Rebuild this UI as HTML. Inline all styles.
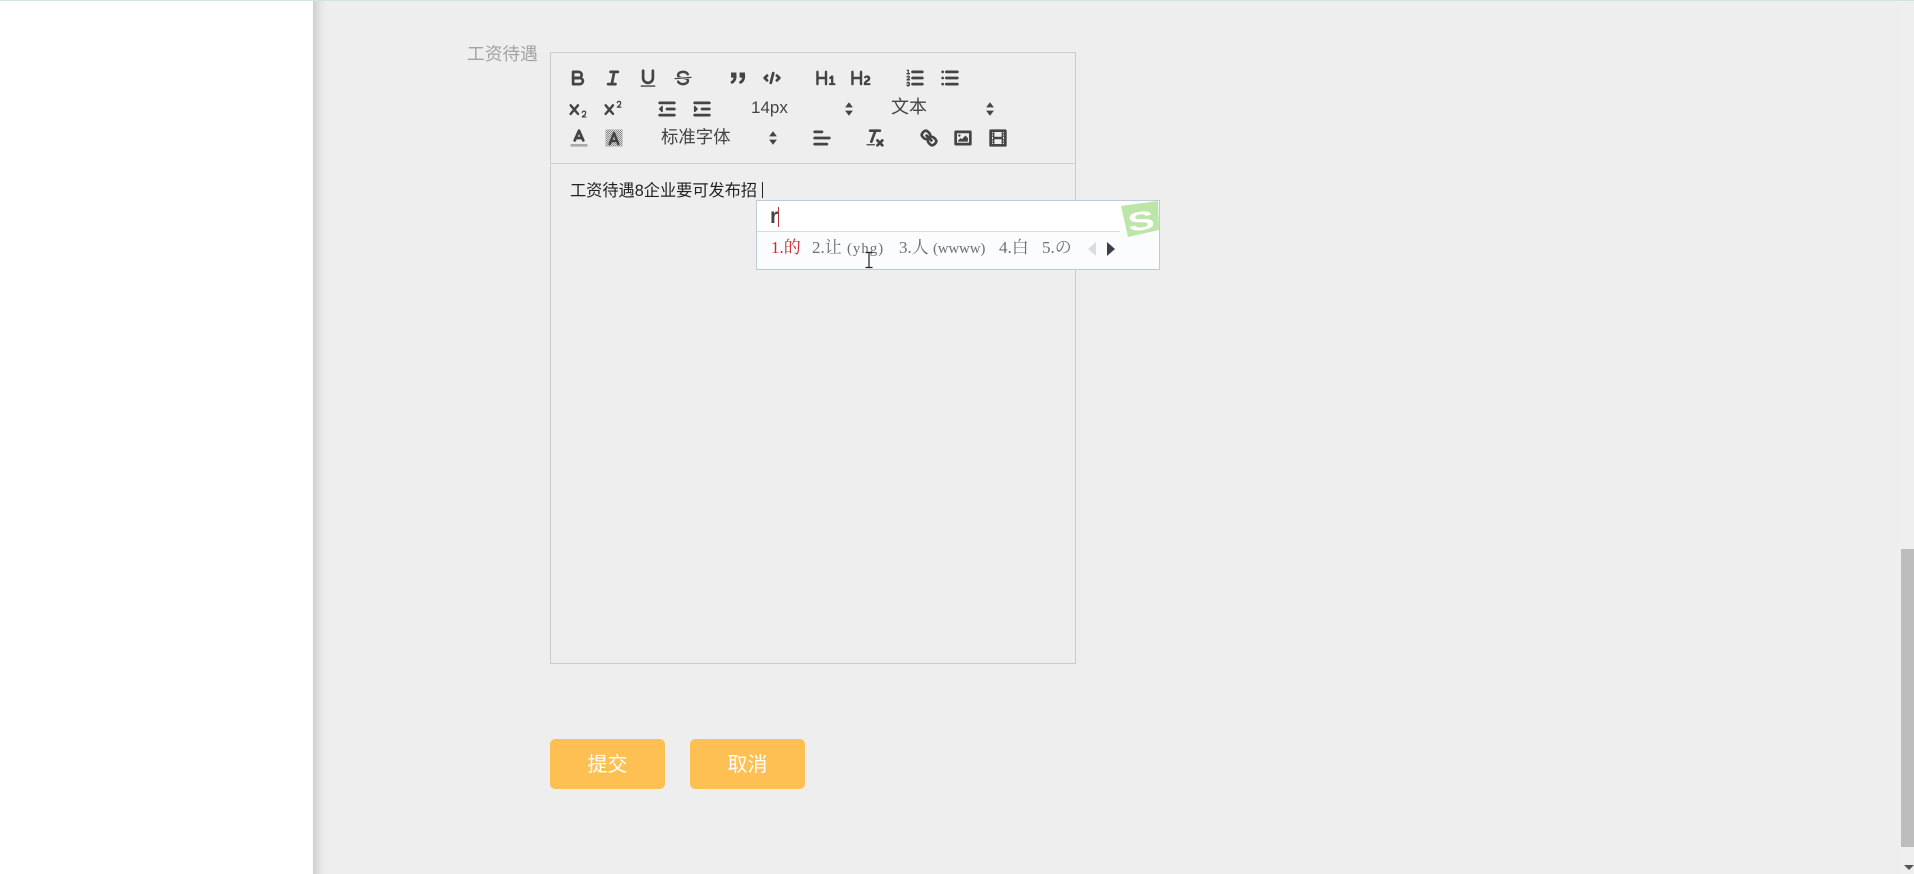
<!DOCTYPE html>
<html lang="zh">
<head>
<meta charset="utf-8">
<title>工资待遇</title>
<style>
html,body{margin:0;padding:0;width:1914px;height:874px;overflow:hidden;background:#eeeeee}
body{position:relative;font-family:"Liberation Sans","Noto Sans CJK SC",sans-serif}
.a{position:absolute;white-space:nowrap}
svg.i{position:absolute;width:22px;height:22px;fill:none;stroke:#444;stroke-width:2.2;stroke-linecap:round;stroke-linejoin:round}
svg.i .f{fill:#444;stroke:none}
svg.i .t{stroke-width:1.1}
.r1{top:67px}.r2{top:97.5px}.r3{top:127px}
.sel{font-size:17px;color:#444;line-height:22px}
.btn{position:absolute;top:739px;width:115px;height:50px;background:#ffc053;border-radius:5px;color:#fff;font-size:20px;line-height:52px;text-align:center}
.c{position:absolute;top:235px;font-family:"Liberation Serif","Noto Serif CJK SC",serif;font-size:17px;line-height:26px;color:#6f6f6f;white-space:nowrap}
.p{font-size:15px;letter-spacing:.9px}
.w{font-size:15px;letter-spacing:-.2px}
</style>
</head>
<body>
<div class="a" style="left:0;top:0;width:1914px;height:1px;background:#cfe4df"></div>
<div class="a" style="left:0;top:1px;width:313px;height:873px;background:#fff"></div>
<div class="a" style="left:313px;top:1px;width:14px;height:873px;background:linear-gradient(to right,#cfcfcf,#e6e6e6 55%,#eeeeee)"></div>

<div class="a" style="left:467px;top:42px;font-size:17.7px;line-height:24px;color:#a3a3a3">工资待遇</div>

<div class="a" style="left:550px;top:52px;width:524px;height:610px;border:1px solid #cbcbcb"></div>
<div class="a" style="left:550px;top:163px;width:525px;height:1px;background:#d2d2d2"></div>

<!-- Row 1 -->
<svg class="i r1" style="left:567px" viewBox="0 0 18 18"><path d="M5,4H9.5A2.5,2.5,0,0,1,12,6.5v0A2.5,2.5,0,0,1,9.5,9H5A0,0,0,0,1,5,9V4A0,0,0,0,1,5,4Z"/><path d="M5,9h5.5A2.5,2.5,0,0,1,13,11.5v0A2.5,2.5,0,0,1,10.5,14H5a0,0,0,0,1,0,0V9A0,0,0,0,1,5,9Z"/></svg>
<svg class="i r1" style="left:602px" viewBox="0 0 18 18"><line x1="7" x2="13" y1="4" y2="4"/><line x1="5" x2="11" y1="14" y2="14"/><line x1="8" x2="10" y1="14" y2="4"/></svg>
<svg class="i r1" style="left:637px" viewBox="0 0 18 18"><path d="M5,3V9a4.012,4.012,0,0,0,4,4H9a4.012,4.012,0,0,0,4-4V3"/><rect class="f" height="1.200" rx=".5" ry=".5" width="12" x="3" y="15"/></svg>
<svg class="i r1" style="left:672px" viewBox="0 0 18 18"><line class="t" x1="15.5" x2="2.5" y1="8.5" y2="9.500"/><path class="f" d="M9.007,8C6.542,7.791,6,7.519,6,6.5,6,5.792,7.283,5,9,5c1.571,0,2.765.679,2.969,1.309a1,1,0,0,0,1.9-.617C13.356,4.106,11.354,3,9,3,6.2,3,4,4.538,4,6.5a3.2,3.2,0,0,0,.5,1.843Z"/><path class="f" d="M8.984,10C11.457,10.208,12,10.479,12,11.5c0,.708-1.283,1.5-3,1.5-1.571,0-2.765-.679-2.969-1.309a1,1,0,1,0-1.9.617C4.644,13.894,6.646,15,9,15c2.8,0,5-1.538,5-3.5a3.2,3.2,0,0,0-.5-1.843Z"/></svg>
<svg class="i r1" style="left:726.500px" viewBox="0 0 18 18"><rect class="f" height="4.200" width="4.400" x="3.300" y="4.500"/><rect class="f" height="4.200" width="4.400" x="10.300" y="4.500"/><path d="M6.700,7.500c0,4-2.600,5-2.600,5" style="stroke-width:2.300"/><path d="M13.700,7.500c0,4-2.600,5-2.600,5" style="stroke-width:2.300"/></svg>
<svg class="i r1" style="left:761px" viewBox="0 0 18 18"><polyline points="5 7 3 9 5 11"/><polyline points="13 7 15 9 13 11"/><line x1="10" x2="8" y1="5" y2="13"/></svg>
<svg class="i r1" style="left:815px" viewBox="0 0 18 18"><path class="f" d="M10,4V14a1,1,0,0,1-2,0V10H3v4a1,1,0,0,1-2,0V4A1,1,0,0,1,3,4V8H8V4a1,1,0,0,1,2,0Zm6.06787,9.209H14.98975V7.59863a.54085.54085,0,0,0-.605-.60547h-.62744a1.01119,1.01119,0,0,0-.748.29688L11.645,8.56641a.5435.5435,0,0,0-.022.8584l.28613.30762a.53861.53861,0,0,0,.84717.0332l.09912-.08789a1.2137,1.2137,0,0,0,.2417-.35254h.02246s-.01123.30859-.01123.60547V13.209H12.041a.54085.54085,0,0,0-.605.60547v.43945a.54085.54085,0,0,0,.605.60547h4.02686a.54085.54085,0,0,0,.605-.60547v-.43945A.54085.54085,0,0,0,16.06787,13.209Z"/></svg>
<svg class="i r1" style="left:850px" viewBox="0 0 18 18"><path class="f" d="M16.73975,13.81445v.43945a.54085.54085,0,0,1-.605.60547H11.855a.58392.58392,0,0,1-.64893-.60547V14.0127c0-2.90527,3.39941-3.42187,3.39941-4.55469a.77675.77675,0,0,0-.84717-.78125,1.17684,1.17684,0,0,0-.83594.38477c-.2749.26367-.561.374-.85791.13184l-.4292-.34082c-.30811-.24219-.38525-.51758-.1543-.81445a2.97155,2.97155,0,0,1,2.45361-1.17676,2.45393,2.45393,0,0,1,2.68408,2.40918c0,2.45312-3.1792,2.92676-3.27832,3.93848h2.79443A.54085.54085,0,0,1,16.73975,13.81445ZM9,3A.99974.99974,0,0,0,8,4V8H3V4A1,1,0,0,0,1,4V14a1,1,0,0,0,2,0V10H8v4a1,1,0,0,0,2,0V4A.99974.99974,0,0,0,9,3Z"/></svg>
<svg class="i r1" style="left:904px" viewBox="0 0 18 18"><line x1="7" x2="15" y1="4" y2="4"/><line x1="7" x2="15" y1="9" y2="9"/><line x1="7" x2="15" y1="14" y2="14"/><line class="t" x1="2.5" x2="4.5" y1="5.5" y2="5.5"/><path class="f" d="M3.5,6A0.5,0.5,0,0,1,3,5.5V3.085l-0.276.138A0.5,0.5,0,0,1,2.053,3c-0.124-.247-0.023-0.324.224-0.447l1-.5A0.5,0.5,0,0,1,4,2.5v3A0.5,0.5,0,0,1,3.5,6Z"/><path class="t" d="M4.5,10.5h-2c0-.234,1.85-1.076,1.85-2.234A0.959,0.959,0,0,0,2.5,8.156"/><path class="t" d="M2.5,14.846a0.959,0.959,0,0,0,1.85-.109A0.7,0.7,0,0,0,3.75,14a0.688,0.688,0,0,0,.6-0.736,0.959,0.959,0,0,0-1.85-.109"/></svg>
<svg class="i r1" style="left:939px" viewBox="0 0 18 18"><line x1="6" x2="15" y1="4" y2="4"/><line x1="6" x2="15" y1="9" y2="9"/><line x1="6" x2="15" y1="14" y2="14"/><line x1="3" x2="3" y1="4" y2="4"/><line x1="3" x2="3" y1="9" y2="9"/><line x1="3" x2="3" y1="14" y2="14"/></svg>

<!-- Row 2 -->
<svg class="i r2" style="left:567px" viewBox="0 0 18 18"><path class="f" d="M15.5,15H13.861a3.858,3.858,0,0,0,1.914-2.975,1.8,1.8,0,0,0-1.6-1.751A1.921,1.921,0,0,0,12.021,11.7a0.50013,0.50013,0,1,0,.957.291h0a0.914,0.914,0,0,1,1.053-.725,0.81,0.81,0,0,1,.744.762c0,1.076-1.16971,1.86982-1.93971,2.43082A1.45639,1.45639,0,0,0,12,15.5a0.5,0.5,0,0,0,.5.5h3A0.5,0.5,0,0,0,15.5,15Z"/><path class="f" d="M9.65,5.241a1,1,0,0,0-1.409.108L6,7.964,3.759,5.349A1,1,0,0,0,2.192,6.59178Q2.21541,6.6213,2.241,6.649L4.684,9.5,2.241,12.35A1,1,0,0,0,3.71,13.70722q0.02557-.02768.049-0.05722L6,11.036,8.241,13.65a1,1,0,1,0,1.567-1.24277Q9.78459,12.3777,9.759,12.35L7.316,9.5,9.759,6.651A1,1,0,0,0,9.65,5.241Z"/></svg>
<svg class="i r2" style="left:602px" viewBox="0 0 18 18"><path class="f" d="M15.5,7H13.861a4.015,4.015,0,0,0,1.914-2.975,1.8,1.8,0,0,0-1.6-1.751A1.922,1.922,0,0,0,12.021,3.7a0.5,0.5,0,1,0,.957.291,0.917,0.917,0,0,1,1.053-.725,0.81,0.81,0,0,1,.744.762c0,1.077-1.164,1.925-1.934,2.486A1.423,1.423,0,0,0,12,7.5a0.5,0.5,0,0,0,.5.5h3A0.5,0.5,0,0,0,15.5,7Z"/><path class="f" d="M9.651,5.241a1,1,0,0,0-1.41.108L6,7.964,3.759,5.349a1,1,0,1,0-1.519,1.3L4.683,9.5,2.241,12.35a1,1,0,1,0,1.519,1.3L6,11.036,8.241,13.65a1,1,0,0,0,1.519-1.3L7.317,9.5,9.759,6.651A1,1,0,0,0,9.651,5.241Z"/></svg>
<svg class="i r2" style="left:656px" viewBox="0 0 18 18"><line x1="3" x2="15" y1="14" y2="14"/><line x1="3" x2="15" y1="4" y2="4"/><line x1="9" x2="15" y1="9" y2="9"/><polyline class="f" points="5 7 5 11 3 9 5 7" style="stroke:#444;stroke-width:1.200"/></svg>
<svg class="i r2" style="left:691px" viewBox="0 0 18 18"><line x1="3" x2="15" y1="14" y2="14"/><line x1="3" x2="15" y1="4" y2="4"/><line x1="9" x2="15" y1="9" y2="9"/><polyline class="f" points="3 7 3 11 5 9 3 7" style="stroke:#444;stroke-width:1.200"/></svg>
<div class="a sel" style="left:751px;top:97px">14px</div>
<svg class="i r2" style="left:838px" viewBox="0 0 18 18"><polygon class="f" points="5.800 7.700 9 3.500 12.200 7.700"/><polygon class="f" points="5.800 10.300 9 14.500 12.200 10.300"/></svg>
<div class="a sel" style="left:891px;top:96px;font-size:18px">文本</div>
<svg class="i r2" style="left:979px" viewBox="0 0 18 18"><polygon class="f" points="5.800 7.700 9 3.500 12.200 7.700"/><polygon class="f" points="5.800 10.300 9 14.500 12.200 10.300"/></svg>

<!-- Row 3 -->
<svg class="i r3" style="left:568px" viewBox="0 0 18 18"><line x1="3" x2="15" y1="15" y2="15" style="stroke:#aaa"/><polyline points="5.5 11 9 3 12.5 11"/><line x1="11.63" x2="6.38" y1="9" y2="9"/></svg>
<svg class="i r3" style="left:603px" viewBox="0 0 18 18"><defs><pattern id="chk" width="1.640" height="1.640" patternUnits="userSpaceOnUse"><rect width=".82" height=".82" fill="#777" stroke="none"/><rect x=".82" y=".82" width=".82" height=".82" fill="#777" stroke="none"/></pattern></defs><rect x="2" y="2" width="14" height="14" fill="url(#chk)" stroke="none"/><polyline points="5.5 14 9 5 12.5 14" style="stroke-width:2"/><line x1="11.63" x2="6.38" y1="11.500" y2="11.500" style="stroke-width:2"/></svg>
<div class="a sel" style="left:661px;top:126px;font-size:17.400px">标准字体</div>
<svg class="i r3" style="left:761.500px" viewBox="0 0 18 18"><polygon class="f" points="5.800 7.700 9 3.500 12.200 7.700"/><polygon class="f" points="5.800 10.300 9 14.500 12.200 10.300"/></svg>
<svg class="i r3" style="left:811px" viewBox="0 0 18 18"><line x1="3" x2="15" y1="9" y2="9"/><line x1="3" x2="13" y1="14" y2="14"/><line x1="3" x2="9" y1="4" y2="4"/></svg>
<svg class="i r3" style="left:864px" viewBox="0 0 18 18"><line x1="5" x2="13" y1="3" y2="3"/><line x1="6" x2="9.35" y1="12" y2="3"/><line x1="11" x2="15" y1="11" y2="15"/><line x1="15" x2="11" y1="11" y2="15"/><rect class="f" height="1" rx=".5" ry=".5" width="7" x="2" y="14"/></svg>
<svg class="i r3" style="left:917.500px" viewBox="0 0 18 18"><line x1="7" x2="11" y1="7" y2="11"/><path d="M8.9,4.577a3.476,3.476,0,0,1,.36,4.679A3.476,3.476,0,0,1,4.577,8.9C3.185,7.5,2.035,6.4,4.217,4.217S7.5,3.185,8.9,4.577Z"/><path d="M13.423,9.1a3.476,3.476,0,0,0-4.679-.36,3.476,3.476,0,0,0,.36,4.679c1.392,1.392,2.5,2.542,4.679.36S14.815,10.5,13.423,9.1Z"/></svg>
<svg class="i r3" style="left:952px" viewBox="0 0 18 18"><rect height="10" width="12" x="3" y="4"/><circle class="f" cx="6" cy="7" r="1"/><polyline class="f" points="5 12 5 11 7 9 8 10 11 7 13 9 13 12 5 12"/></svg>
<svg class="i r3" style="left:987px" viewBox="0 0 18 18"><rect height="12" width="12" x="3" y="3"/><rect class="f" height="12" width="1" x="5" y="3"/><rect class="f" height="12" width="1" x="12" y="3"/><rect class="f" height="2" width="8" x="5" y="8"/><rect class="f" height="1" width="3" x="3" y="5"/><rect class="f" height="1" width="3" x="3" y="7"/><rect class="f" height="1" width="3" x="3" y="10"/><rect class="f" height="1" width="3" x="3" y="12"/><rect class="f" height="1" width="3" x="12" y="5"/><rect class="f" height="1" width="3" x="12" y="7"/><rect class="f" height="1" width="3" x="12" y="10"/><rect class="f" height="1" width="3" x="12" y="12"/></svg>

<!-- Editor text -->
<div class="a" style="left:570px;top:178.500px;font-size:16.200px;line-height:24px;color:#222">工资待遇8企业要可发布招</div>
<div class="a" style="left:762px;top:182px;width:1px;height:16px;background:#222"></div>

<!-- IME popup -->
<div class="a" style="left:756px;top:200px;width:402px;height:68px;border:1px solid #bccbd6;background:#fff"></div>
<div class="a" style="left:757px;top:232px;width:402px;height:37px;background:#fbfcfd"></div>
<div class="a" style="left:757px;top:231px;width:363px;height:1px;background:#d9dcdf"></div>
<div class="a" style="left:770px;top:204px;font-size:21px;line-height:26px;font-weight:bold;color:#444">r</div>
<div class="a" style="left:778px;top:207px;width:1px;height:20px;background:#b5303a"></div>

<div class="c" style="left:771px;color:#cc2a2f">1.的</div>
<div class="c" style="left:812px">2.让</div>
<div class="c" style="left:847px"><span class="p">(yhg)</span></div>
<div class="c" style="left:899px">3.人</div>
<div class="c" style="left:933px"><span class="w">(wwww)</span></div>
<div class="c" style="left:999px">4.白</div>
<div class="c" style="left:1042px">5.の</div>
<svg class="a" style="left:1088px;top:242px" width="30" height="15" viewBox="0 0 30 15"><polygon points="8,0 8,14 0,7" fill="#d9dde0"/><polygon points="19,0 27,7 19,14" fill="#3a3f4a"/></svg>

<!-- Sogou logo -->
<svg class="a" style="left:1120px;top:200px" width="39" height="38" viewBox="0 0 39 38">
<polygon points="1,6 38,1 39,30 8,37" fill="#bce5a8"/>
<g transform="rotate(-8 21 20)"><text transform="translate(21 30) scale(1.6 1.05)" text-anchor="middle" font-family="Liberation Sans, sans-serif" font-weight="bold" font-size="25" fill="#fff">S</text></g>
</svg>

<!-- I-beam cursor -->
<svg class="a" style="left:864px;top:251px" width="10" height="18" viewBox="0 0 10 18"><path d="M1.5 1.500H8.500M5 1.500V16.500M1.500 16.500H8.500" stroke="#222" stroke-width="1.200" fill="none"/></svg>

<!-- Buttons -->
<div class="btn" style="left:550px">提交</div>
<div class="btn" style="left:690px">取消</div>

<!-- Scrollbar -->
<div class="a" style="left:1899px;top:1px;width:15px;height:873px;background:#efefef"></div>
<div class="a" style="left:1901px;top:549px;width:13px;height:298px;background:#bdbdbd"></div>
<svg class="a" style="left:1904px;top:865px" width="10" height="6" viewBox="0 0 10 6"><polygon points="0,0 10,0 5,5" fill="#555"/></svg>
</body>
</html>
